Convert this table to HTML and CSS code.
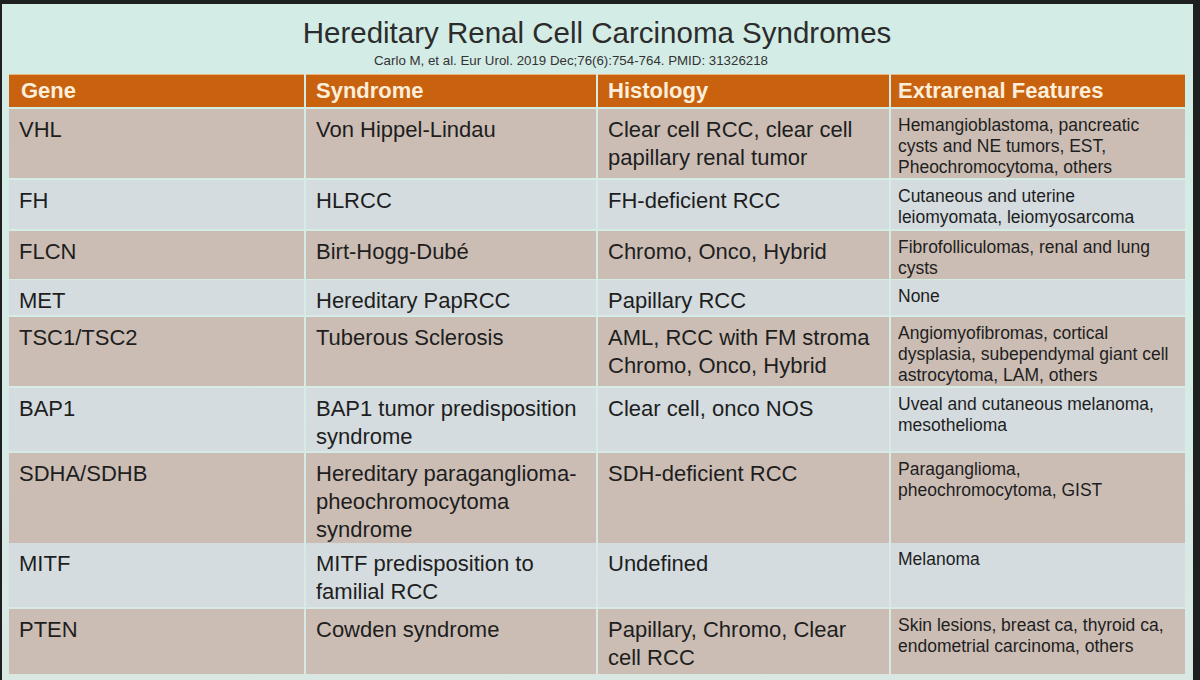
FILE: index.html
```html
<!DOCTYPE html>
<html lang="en">
<head>
<meta charset="utf-8">
<title>Hereditary Renal Cell Carcinoma Syndromes</title>
<link rel="stylesheet" href="styles.css">
</head>
<body>
<div class="slide">
  <h1 class="title">Hereditary Renal Cell Carcinoma Syndromes</h1>
  <p class="cite">Carlo M, et al. Eur Urol. 2019 Dec;76(6):754-764. PMID: 31326218</p>
  <div class="table">
    <div class="row head">
      <div class="cell">Gene</div>
      <div class="cell">Syndrome</div>
      <div class="cell">Histology</div>
      <div class="cell">Extrarenal Features</div>
    </div>
    <div class="row tan h-vhl">
      <div class="cell">VHL</div>
      <div class="cell">Von Hippel-Lindau</div>
      <div class="cell">Clear cell RCC, clear cell papillary renal tumor</div>
      <div class="cell small">Hemangioblastoma, pancreatic cysts and NE tumors, EST, Pheochromocytoma, others</div>
    </div>
    <div class="row light h-fh">
      <div class="cell">FH</div>
      <div class="cell">HLRCC</div>
      <div class="cell">FH-deficient RCC</div>
      <div class="cell small">Cutaneous and uterine leiomyomata, leiomyosarcoma</div>
    </div>
    <div class="row tan h-flcn">
      <div class="cell">FLCN</div>
      <div class="cell">Birt-Hogg-Dubé</div>
      <div class="cell">Chromo, Onco, Hybrid</div>
      <div class="cell small">Fibrofolliculomas, renal and lung cysts</div>
    </div>
    <div class="row light h-met">
      <div class="cell">MET</div>
      <div class="cell">Hereditary PapRCC</div>
      <div class="cell">Papillary RCC</div>
      <div class="cell small">None</div>
    </div>
    <div class="row tan h-tsc">
      <div class="cell">TSC1/TSC2</div>
      <div class="cell">Tuberous Sclerosis</div>
      <div class="cell">AML, RCC with FM stroma Chromo, Onco, Hybrid</div>
      <div class="cell small">Angiomyofibromas, cortical dysplasia, subependymal giant cell astrocytoma, LAM, others</div>
    </div>
    <div class="row light h-bap">
      <div class="cell">BAP1</div>
      <div class="cell">BAP1 tumor predisposition syndrome</div>
      <div class="cell">Clear cell, onco NOS</div>
      <div class="cell small">Uveal and cutaneous melanoma, mesothelioma</div>
    </div>
    <div class="row tan h-sdh">
      <div class="cell">SDHA/SDHB</div>
      <div class="cell">Hereditary paraganglioma-<br>pheochromocytoma syndrome</div>
      <div class="cell">SDH-deficient RCC</div>
      <div class="cell small">Paraganglioma,<br>pheochromocytoma, GIST</div>
    </div>
    <div class="row light h-mitf">
      <div class="cell">MITF</div>
      <div class="cell">MITF predisposition to familial RCC</div>
      <div class="cell">Undefined</div>
      <div class="cell small">Melanoma</div>
    </div>
    <div class="row tan h-pten">
      <div class="cell">PTEN</div>
      <div class="cell">Cowden syndrome</div>
      <div class="cell">Papillary, Chromo, Clear cell RCC</div>
      <div class="cell small">Skin lesions, breast ca, thyroid ca, endometrial carcinoma, others</div>
    </div>
  </div>
</div>
</body>
</html>
```
FILE: styles.css
```css
html, body {
  margin: 0;
  padding: 0;
}
body {
  width: 1200px;
  height: 680px;
  overflow: hidden;
  background: #1d201f;
  font-family: "Liberation Sans", Arial, sans-serif;
  color: #1e1e1e;
}
.slide {
  margin: 4px 7px 0 2px;
  height: 676px;
  background: linear-gradient(180deg, #d3ece6 0%, #d6ebe6 60%, #dae8e4 100%);
  padding: 12px 8px 0 7px;
  box-sizing: border-box;
}
.title {
  margin: 0;
  font-weight: normal;
  font-size: 29.5px;
  line-height: 34px;
  text-align: center;
  color: #2c2c2c;
}
.cite {
  margin: 3px 0 0 0;
  padding-right: 52px;
  font-size: 13.3px;
  line-height: 15px;
  text-align: center;
  color: #333;
}
.table {
  margin-top: 6px;
  display: flex;
  flex-direction: column;
  gap: 2px;
}
.row {
  display: grid;
  grid-template-columns: 295px 290px 291px 1fr;
  column-gap: 2px;
}
.cell {
  padding: 7px 10px 0 10px;
  font-size: 22px;
  line-height: 28px;
  box-sizing: border-box;
}
.cell.small {
  padding: 6px 8px 0 7px;
  font-size: 17.5px;
  line-height: 20.8px;
}
.head {
  height: 33px;
}
.head .cell {
  background: #c9620f;
  color: #fbeedb;
  font-weight: bold;
  padding: 2px 10px 0 10px;
  border-top: 1px solid #e9b27a;
}
.head .cell:first-child {
  padding-left: 12px;
}
.head .cell:last-child {
  padding-left: 7px;
}
.tan .cell {
  background: #cbbdb4;
}
.light .cell {
  background: #d4dcdf;
}
.h-vhl { height: 69px; }
.h-fh { height: 49px; }
.h-flcn { height: 47px; }
.h-met { height: 35px; }
.h-tsc { height: 69px; }
.h-bap { height: 63px; }
.h-sdh { height: 88px; }
.h-mitf { height: 64px; }
.h-pten { height: 65px; }
```
